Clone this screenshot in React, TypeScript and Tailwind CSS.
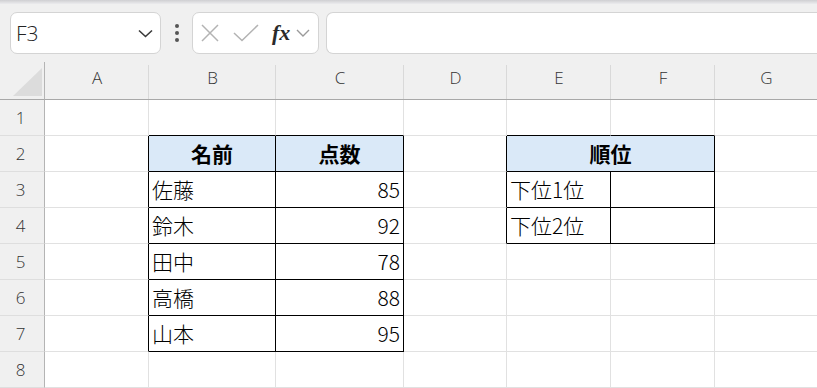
import React from "react";

const COLS = ["A", "B", "C", "D", "E", "F", "G"];
const ROWS = [1, 2, 3, 4, 5, 6, 7, 8];

type Cell = { text?: string; align?: "left" | "right" | "center"; bold?: boolean; fill?: boolean; span?: number; skip?: boolean };

const data: Record<string, Cell> = {
  B2: { text: "名前", align: "center", bold: true, fill: true },
  C2: { text: "点数", align: "center", bold: true, fill: true },
  B3: { text: "佐藤" },
  C3: { text: "85", align: "right" },
  B4: { text: "鈴木" },
  C4: { text: "92", align: "right" },
  B5: { text: "田中" },
  C5: { text: "78", align: "right" },
  B6: { text: "高橋" },
  C6: { text: "88", align: "right" },
  B7: { text: "山本" },
  C7: { text: "95", align: "right" },
  E2: { text: "順位", align: "center", bold: true, fill: true, span: 2 },
  F2: { skip: true },
  E3: { text: "下位1位" },
  E4: { text: "下位2位" },
};

function rightBlack(c: number, r: number) {
  if (r >= 2 && r <= 7 && c >= 1 && c <= 3) return true;
  if (r >= 2 && r <= 4 && c >= 4 && c <= 6) return true;
  return false;
}
function bottomBlack(c: number, r: number) {
  if ((c === 2 || c === 3) && r >= 1 && r <= 7) return true;
  if ((c === 5 || c === 6) && r >= 1 && r <= 4) return true;
  return false;
}

const font = { fontFamily: '"Noto Sans CJK JP", "Noto Sans", sans-serif' };
const uiFont = { fontFamily: '"Open Sans", "Noto Sans", "Liberation Sans", sans-serif' };

export default function App() {
  return (
    <div className="w-[817px] h-[388px] overflow-hidden bg-[#f0f0f0] relative">
      {/* top shadow strip */}
      <div className="h-[4px] bg-gradient-to-b from-[#cfcfd2] to-[#ececee]" />
      {/* toolbar */}
      <div className="h-[58px] flex items-start pt-[8px] pl-[10px] gap-0">
        <div className="w-[151px] h-[42px] bg-white border border-[#d4d4d4] rounded-[7px] flex items-center justify-between pl-[5px] pr-[7px]">
          <span className="text-[21px] font-light text-[#222] leading-none" style={uiFont}>F3</span>
          <svg width="15" height="9" viewBox="0 0 15 9">
            <path d="M1 1.5 L7.5 7.5 L14 1.5" fill="none" stroke="#3a3a3a" strokeWidth="1.6" />
          </svg>
        </div>
        <div className="w-[31px] h-[42px] flex flex-col items-center justify-center gap-[3px]">
          <div className="w-[4px] h-[4px] rounded-full bg-[#555]" />
          <div className="w-[4px] h-[4px] rounded-full bg-[#555]" />
          <div className="w-[4px] h-[4px] rounded-full bg-[#555]" />
        </div>
        <div className="w-[127px] h-[42px] bg-white border border-[#d4d4d4] rounded-[7px] flex items-center pl-[8px]">
          <svg width="18" height="18" viewBox="0 0 18 18">
            <path d="M1 1 L17 17 M17 1 L1 17" stroke="#b3b3b3" strokeWidth="1.5" fill="none" />
          </svg>
          <svg width="26" height="18" viewBox="0 0 26 18" className="ml-[14px]">
            <path d="M1 9 L9 16.5 L25 1" stroke="#b3b3b3" strokeWidth="1.5" fill="none" />
          </svg>
          <span
            className="ml-[13px] text-[22px] italic font-bold text-[#2a2a2a] leading-none"
            style={{ fontFamily: '"Liberation Serif", "DejaVu Serif", serif' }}
          >
            fx
          </span>
          <svg width="14" height="8" viewBox="0 0 14 8" className="ml-[6px]">
            <path d="M1 1 L7 7 L13 1" fill="none" stroke="#9a9a9a" strokeWidth="1.4" />
          </svg>
        </div>
        <div className="ml-[7px] flex-1 h-[42px] bg-white border border-r-0 border-[#d4d4d4] rounded-l-[7px]" />
      </div>

      {/* grid */}
      <div
        className="grid bg-white relative"
        style={{ gridTemplateColumns: "45px 104px 127px 128px 103px 104px 104px 103px", gridTemplateRows: "38px repeat(8, 36px)" }}
      >
        <div className="absolute left-[44px] top-[1px] w-px h-px bg-black" />
        {/* corner */}
        <div className="bg-[#f0f0f0] border-r border-b border-r-[#b4b4b4] border-b-[#a8a8a8] relative">
          <svg width="29" height="28" viewBox="0 0 29 28" className="absolute left-[13px] top-[6px]">
            <path d="M29 0 L29 28 L0 28 Z" fill="#dcdcdc" />
          </svg>
        </div>
        {COLS.map((c) => (
          <div
            key={c}
            className="bg-[#f0f0f0] border-b border-b-[#a8a8a8] flex items-center justify-center pb-[5px] relative"
            style={uiFont}
          >
            <span className="text-[17px] font-light text-[#333]">{c}</span>
            <div className="absolute right-0 top-[3px] bottom-0 w-px bg-[#d9d9d9]" />
          </div>
        ))}
        {ROWS.map((r) => (
          <React.Fragment key={r}>
            <div
              className="bg-[#f0f0f0] border-r border-b border-r-[#b4b4b4] border-b-[#dedede] flex items-center justify-center"
              style={uiFont}
            >
              <span className="text-[17px] font-light text-[#333] pr-[3px]">{r}</span>
            </div>
            {COLS.map((c, i) => {
              const ci = i + 1;
              const cell = data[`${c}${r}`] || {};
              if (cell.skip) return null;
              const rb = cell.span === 2 ? rightBlack(ci + 1, r) : rightBlack(ci, r);
              const bb = bottomBlack(ci, r);
              return (
                <div
                  key={c}
                  className={[
                    "border-r border-b flex items-center px-[3px] overflow-hidden whitespace-nowrap",
                    rb ? "border-r-black" : "border-r-[#e1e1e1]",
                    bb ? "border-b-black" : "border-b-[#e1e1e1]",
                    cell.fill ? "bg-[#dae9f8]" : "bg-white",
                    cell.span === 2 ? "col-span-2" : "",
                    cell.align === "right" ? "justify-end" : cell.align === "center" ? "justify-center" : "justify-start",
                    cell.bold ? "font-bold" : "font-light",
                  ].join(" ")}
                  style={font}
                >
                  {cell.text && <span className="text-[21px] text-black leading-none">{cell.text}</span>}
                </div>
              );
            })}
          </React.Fragment>
        ))}
      </div>
    </div>
  );
}
